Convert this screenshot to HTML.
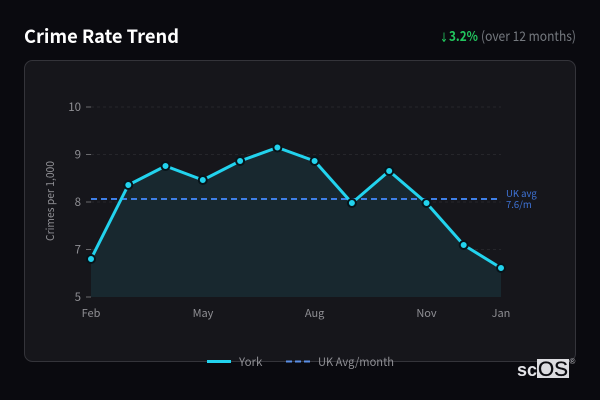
<!DOCTYPE html>
<html><head><meta charset="utf-8"><style>
html,body{margin:0;padding:0;background:#0a0a0f;width:600px;height:400px;overflow:hidden}
svg{display:block}
text{font-family:"Noto Sans CJK JP","Liberation Sans",sans-serif}
</style></head><body>
<svg width="600" height="400" viewBox="0 0 600 400" xmlns="http://www.w3.org/2000/svg">
<rect width="600" height="400" fill="#0a0a0f"/>
<text x="24" y="43" font-size="18.500" font-weight="700" fill="#ffffff" textLength="155" lengthAdjust="spacingAndGlyphs">Crime Rate Trend</text>
<text x="440" y="42" font-size="13" fill="#22c55e" style="font-family:'DejaVu Sans',sans-serif" textLength="8" lengthAdjust="spacingAndGlyphs">↓</text>
<text x="449" y="41" font-size="13.500" font-weight="700" fill="#22c55e" textLength="29" lengthAdjust="spacingAndGlyphs">3.2%</text>
<text x="481" y="41" font-size="13.500" fill="#75797f" textLength="95" lengthAdjust="spacingAndGlyphs">(over 12 months)</text>
<rect x="24.500" y="60.500" width="551" height="301" rx="8" fill="#16161b" stroke="#34343a"/>
<g stroke="#26262b" stroke-dasharray="3 3">
<path d="M91 107H501M91 154.500H501M91 202H501M91 249.500H501"/>
</g>
<path d="M86 107h5M86 154.500h5M86 202h5M86 249.500h5M86 297h5" stroke="#6a6a6e" stroke-width="1"/>
<g font-size="11.500" fill="#8f8f94" text-anchor="end">
<text x="81" y="111">10</text><text x="81" y="158.500">9</text><text x="81" y="206">8</text><text x="81" y="253.500">7</text><text x="81" y="301">5</text>
</g>
<text transform="translate(54,201) rotate(-90)" font-size="11" fill="#8f8f94" text-anchor="middle" textLength="80" lengthAdjust="spacingAndGlyphs">Crimes per 1,000</text>
<path d="M91 259L128.300 185L165.500 166L202.800 180L240.100 161L277.400 147.500L314.600 161L351.900 203L389.200 171L426.500 203L463.700 245L501 268V297H91Z" fill="#18282f"/>
<path d="M91 199H497" stroke="#3f7fe6" stroke-width="2" stroke-dasharray="6 4"/>
<path d="M91 259L128.300 185L165.500 166L202.800 180L240.100 161L277.400 147.500L314.600 161L351.900 203L389.200 171L426.500 203L463.700 245L501 268" fill="none" stroke="#22d3ee" stroke-width="3" stroke-linejoin="round"/>
<g fill="#22d3ee" stroke="#07141a" stroke-width="2">
<circle cx="91" cy="259" r="4"/><circle cx="128.300" cy="185" r="4"/><circle cx="165.500" cy="166" r="4"/><circle cx="202.800" cy="180" r="4"/><circle cx="240.100" cy="161" r="4"/><circle cx="277.400" cy="147.500" r="4"/><circle cx="314.600" cy="161" r="4"/><circle cx="351.900" cy="203" r="4"/><circle cx="389.200" cy="171" r="4"/><circle cx="426.500" cy="203" r="4"/><circle cx="463.700" cy="245" r="4"/><circle cx="501" cy="268" r="4"/>
</g>
<g font-size="11" fill="#8f8f94" text-anchor="middle">
<text x="91" y="317">Feb</text><text x="203" y="317">May</text><text x="314.600" y="317">Aug</text><text x="426.500" y="317">Nov</text><text x="501" y="317">Jan</text>
</g>
<text x="506" y="197" font-size="9.500" fill="#3f74d8">UK avg</text>
<text x="506" y="208" font-size="9.500" fill="#3f74d8">7.6/m</text>
<path d="M207 361.500H231" stroke="#22d3ee" stroke-width="3"/>
<text x="239" y="366" font-size="11.500" fill="#8f8f94">York</text>
<path d="M286 361.500H311" stroke="#5b8fe6" stroke-width="2" stroke-dasharray="6 3"/>
<text x="318" y="366" font-size="11.500" fill="#8f8f94" textLength="76" lengthAdjust="spacingAndGlyphs">UK Avg/month</text>
<rect x="537" y="359" width="32" height="19" fill="#dcdce0"/>
<text x="517" y="376" font-size="18" font-weight="700" fill="#e4e4e8" style="font-family:'Liberation Sans',sans-serif" textLength="20" lengthAdjust="spacingAndGlyphs">sc</text>
<text x="538" y="376" font-size="21" fill="#0a0a0f" stroke="#0a0a0f" stroke-width="0.300" style="font-family:'Liberation Sans',sans-serif" textLength="30" lengthAdjust="spacingAndGlyphs">OS</text>
<text x="569.500" y="364" font-size="8" fill="#b0b0b5" style="font-family:'Liberation Sans',sans-serif">®</text>
</svg>
</body></html>
